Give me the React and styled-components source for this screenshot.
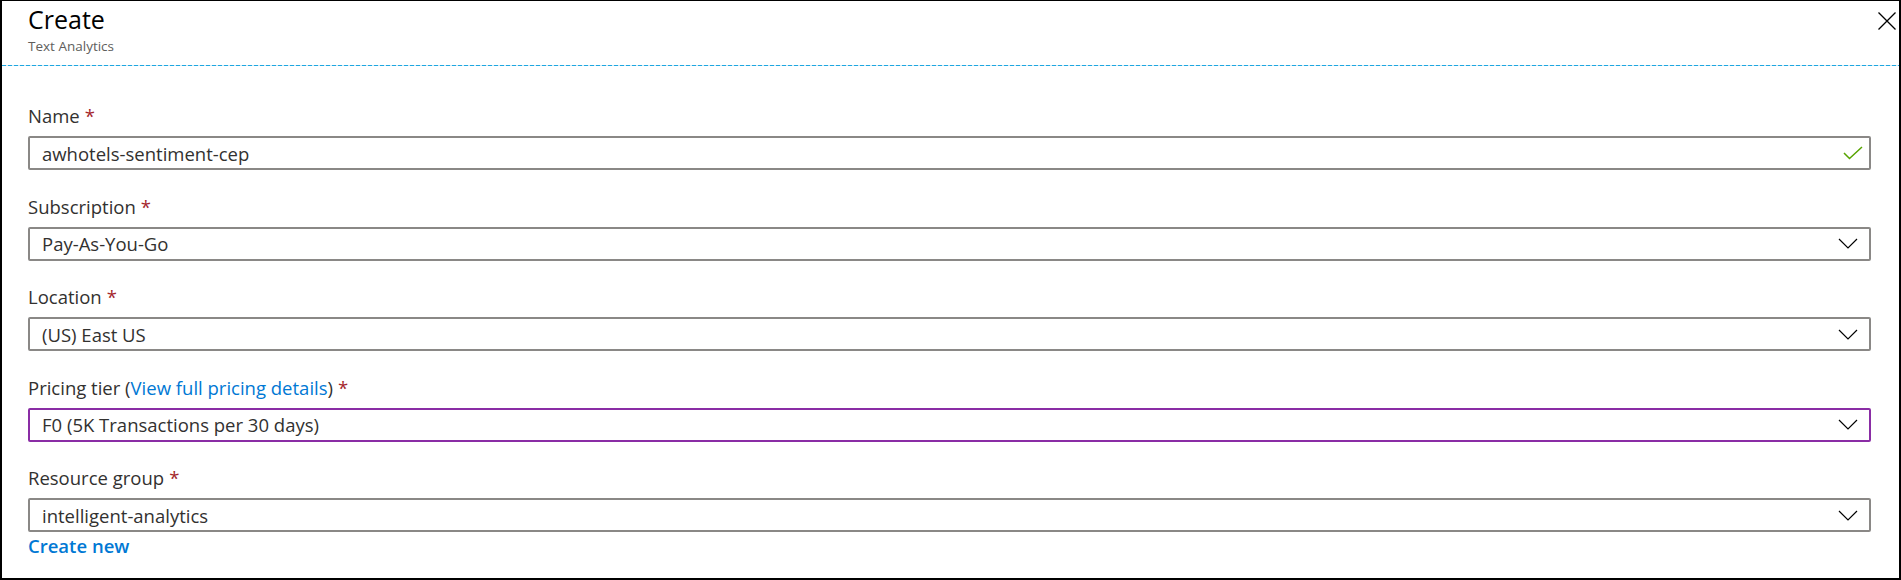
import React from 'react';
import styled, { createGlobalStyle } from 'styled-components';

const GlobalStyle = createGlobalStyle`
  html, body {
    margin: 0;
    padding: 0;
    background: #ffffff;
  }
  body {
    font-family: "Open Sans", "Noto Sans", Arial, sans-serif;
    color: #323130;
  }
`;

const Panel = styled.div`
  box-sizing: border-box;
  width: 1901px;
  height: 580px;
  border-style: solid;
  border-color: #000000;
  border-width: 1px 2px 2px 2px;
  background: #ffffff;
  display: flex;
  flex-direction: column;
`;

const Header = styled.div`
  position: relative;
  height: 64px;
  padding-left: 26px;
  padding-bottom: 1px;
  background-image: repeating-linear-gradient(
    to right,
    #1ea7e1 0,
    #1ea7e1 4px,
    #cfe9f5 4px,
    #cfe9f5 6px
  );
  background-size: 100% 1px;
  background-position: left bottom;
  background-repeat: no-repeat;
`;

const Title = styled.h1`
  margin: 0;
  padding-top: 2px;
  font-size: 25px;
  font-weight: 400;
  line-height: 32px;
  color: #000000;
`;

const Subtitle = styled.div`
  margin-top: 2px;
  font-size: 13.5px;
  line-height: 18px;
  color: #605e5c;
`;

const CloseButton = styled.button`
  position: absolute;
  top: 11px;
  right: 3px;
  width: 18px;
  height: 18px;
  padding: 0;
  border: none;
  background: transparent;
  display: flex;
  cursor: pointer;
`;

const Form = styled.div`
  padding: 37px 28px 0 26px;
  display: flex;
  flex-direction: column;
  gap: 23.5px;
`;

const Field = styled.div`
  display: flex;
  flex-direction: column;
`;

const Label = styled.label`
  font-size: 18.5px;
  line-height: 25px;
  color: #323130;
  margin-bottom: 8px;
`;

const Required = styled.span`
  color: #a4262c;
  margin-left: 5px;
`;

const Link = styled.a`
  color: #0078d4;
  text-decoration: none;
  font-weight: ${(p) => (p.$bold ? 600 : 400)};
  cursor: pointer;
`;

const Box = styled.div`
  box-sizing: border-box;
  height: 34px;
  border: 2px solid ${(p) => (p.$focused ? '#8a2da5' : '#8a8886')};
  border-radius: 2px;
  display: flex;
  align-items: center;
  padding: 0 11px 0 12px;
  font-size: 18.5px;
  line-height: 25px;
  color: #323130;
`;

const Value = styled.span`
  flex: 1;
`;

const IconSlot = styled.span`
  display: flex;
  align-items: center;
  margin-right: ${(p) => p.$shift || 0}px;
`;

const CreateNew = styled(Link)`
  margin-top: 1px;
  font-size: 18.5px;
  line-height: 25px;
  align-self: flex-start;
`;

const Chevron = () => (
  <svg width="20" height="11" viewBox="0 0 20 11">
    <polyline points="1,1 10,10 19,1" fill="none" stroke="#000" strokeWidth="1.2" />
  </svg>
);

const Check = () => (
  <svg width="20" height="14" viewBox="0 0 20 14">
    <polyline points="1,7 6.5,12.5 19,1" fill="none" stroke="#57a300" strokeWidth="1.5" />
  </svg>
);

const CloseIcon = () => (
  <svg width="18" height="18" viewBox="0 0 18 18">
    <path d="M0.5 0.5 L17.5 17.5 M17.5 0.5 L0.5 17.5" stroke="#000" strokeWidth="1.3" fill="none" />
  </svg>
);

const fields = [
  { label: 'Name', value: 'awhotels-sentiment-cep', icon: 'check' },
  { label: 'Subscription', value: 'Pay-As-You-Go', icon: 'chevron' },
  { label: 'Location', value: '(US) East US', icon: 'chevron' },
  { label: 'Pricing tier', link: 'View full pricing details', value: 'F0 (5K Transactions per 30 days)', icon: 'chevron', focused: true },
  { label: 'Resource group', value: 'intelligent-analytics', icon: 'chevron', createNew: true },
];

export default function App() {
  return (
    <>
      <GlobalStyle />
      <Panel>
        <Header>
          <Title>Create</Title>
          <Subtitle>Text Analytics</Subtitle>
          <CloseButton aria-label="Close">
            <CloseIcon />
          </CloseButton>
        </Header>
        <Form>
          {fields.map((f) => (
            <Field key={f.label}>
              <Label>
                {f.label}
                {f.link && (
                  <>
                    {' ('}
                    <Link>{f.link}</Link>
                    {')'}
                  </>
                )}
                <Required>*</Required>
              </Label>
              <Box $focused={f.focused}>
                <Value>{f.value}</Value>
                {f.icon === 'check' ? (
                  <IconSlot $shift={-5}><Check /></IconSlot>
                ) : (
                  <IconSlot><Chevron /></IconSlot>
                )}
              </Box>
              {f.createNew && <CreateNew $bold>Create new</CreateNew>}
            </Field>
          ))}
        </Form>
      </Panel>
    </>
  );
}
